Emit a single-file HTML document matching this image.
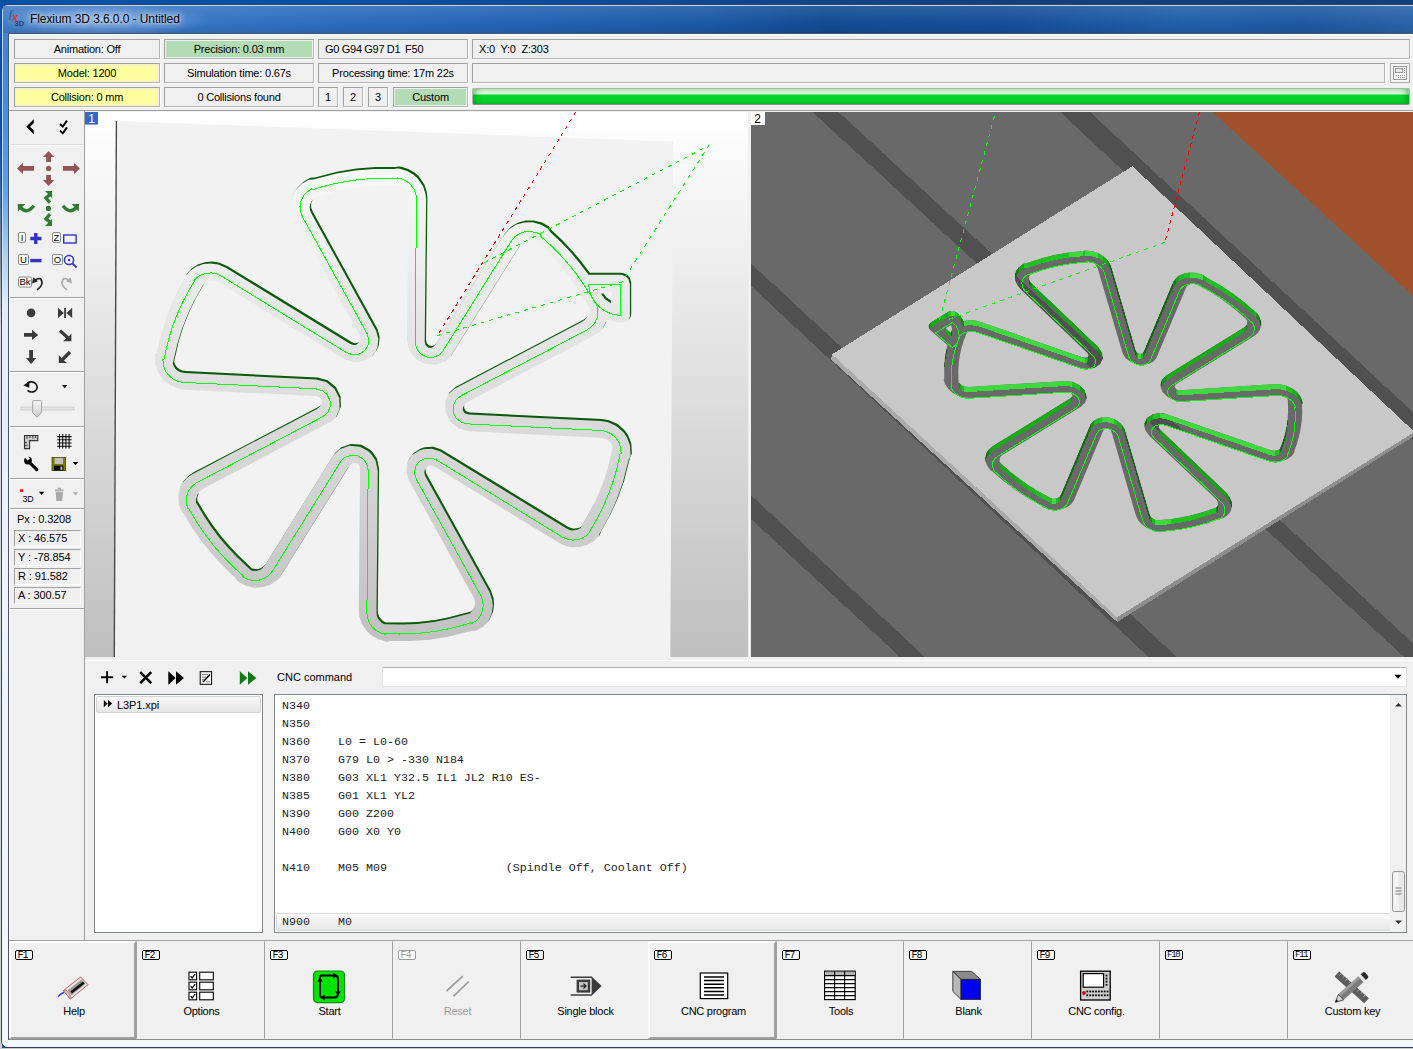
<!DOCTYPE html><html><head><meta charset="utf-8"><title>Flexium 3D 3.6.0.0 - Untitled</title><style>
*{box-sizing:border-box;margin:0;padding:0}
html,body{width:1413px;height:1049px;overflow:hidden;background:linear-gradient(90deg,#0b51a9 0,#0d4d9f 500px,#123f7c 1000px,#133f7a 1413px)}
body{position:relative;font-family:"Liberation Sans",sans-serif;font-size:11px;color:#000}
.abs{position:absolute}
#frame{position:absolute;left:1px;top:4px;width:1430px;height:1044px;border:1px solid #34455f;border-radius:7px 0 0 7px;
 background:linear-gradient(180deg,#3f7fcb 0,#4a8ee0 110px,#5da0ec 185px,#a8ccf2 245px,#e2ecf9 300px,#eef4fb 600px,#f2f9fc 1040px)}
#frame:before{content:"";position:absolute;left:0;top:0;right:0;bottom:0;border:1px solid rgba(230,242,255,.75);border-radius:6px 0 0 6px}
#tbar{position:absolute;left:3px;top:6px;width:1410px;height:27px;
 background:linear-gradient(90deg,#447fc6 0,#3f7dc8 60px,#2f6fbf 300px,#2766b7 480px,#1d5aa6 700px,#134c93 820px,#16509a 1000px,#2360aa 1180px,#1f5aa2 1300px,#2b64a8 1413px)}
#tbar:after{content:"";position:absolute;left:0;right:0;top:0;height:27px;background:linear-gradient(180deg,rgba(255,255,255,.10),rgba(255,255,255,0) 60%,rgba(0,0,30,.10))}
#title{position:absolute;left:30px;top:11px;font-size:12px;line-height:16px;color:#000;white-space:nowrap;letter-spacing:-.08px;
 text-shadow:0 0 6px rgba(255,255,255,.85),0 0 10px rgba(255,255,255,.6),0 0 3px rgba(255,255,255,.5)}
#glow{position:absolute;left:8px;top:6px;width:200px;height:27px;background:radial-gradient(ellipse 110px 16px at 95px 14px,rgba(190,215,245,.55),rgba(190,215,245,0))}
#client{position:absolute;left:8px;top:33px;width:1420px;height:1007px;background:#f0f0f0;border:1px solid #44546b;}
#client:before{content:"";position:absolute;left:0;top:0;right:0;bottom:0;border:1px solid #fff;border-bottom:none}
.cell{position:absolute;height:20px;border:1px solid;border-color:#a0a0a0 #b4b4b4 #b4b4b4 #a0a0a0;font-size:11px;line-height:18px;letter-spacing:-.2px;text-align:center;white-space:nowrap;background:#f0f0f0;box-shadow:inset 0 0 0 1px #f0f0f0,1px 1px 0 #fff}
.cell.l{text-align:left}
.y{background:#ffffa0}.g{background:#b4dcb4}
.hline{position:absolute;height:1px;background:#a0a0a0}
.vline{position:absolute;width:1px;background:#a0a0a0}
.sep{position:absolute;left:10px;width:74px;height:2px;border-top:1px solid #a0a0a0;border-bottom:1px solid #fff}
.coord{position:absolute;left:14px;width:67px;height:17px;border:1px solid;border-color:#a0a0a0 #fff #fff #a0a0a0;font-size:11px;line-height:15px;padding-left:3px;white-space:nowrap;letter-spacing:-.1px}
.fk{position:absolute;top:941px;width:128px;height:98px;border:1px solid transparent;border-left-color:#a0a0a0}
.fk.up{border:1px solid;border-color:#fff #a0a0a0 #a0a0a0 #fff;box-shadow:inset 1px 1px 0 #fff,inset -1px -1px 0 #a0a0a0}
.fk .k{position:absolute;left:5px;top:8px;width:18px;height:10px;border:1px solid #000;border-radius:2px;background:#fff;font-size:10px;line-height:9px;font-family:"Liberation Mono",monospace;letter-spacing:-1px;padding-left:1.5px;overflow:visible}
.fk .t{position:absolute;left:0.5px;width:128px;top:62px;text-align:center;letter-spacing:-.25px;font-size:11px;line-height:14px;white-space:nowrap}
.fk svg{position:absolute;left:48px;top:28px}
.fk .k.k3{font-size:8.8px;letter-spacing:-1.1px;padding-left:1px}.fk.dis .t{color:#9a9a9a}.fk.dis .k{border-color:#9a9a9a;color:#9a9a9a}
#code{position:absolute;left:274px;top:694px;width:1133px;height:239px;border:1px solid #828790;background:#fff;overflow:hidden}
#code pre{position:absolute;left:7px;top:2px;font-family:"Liberation Mono",monospace;font-size:11.67px;line-height:18px;color:#222;white-space:pre}
</style></head><body>
<div class="abs" style="left:0;top:0;width:2px;height:1049px;background:linear-gradient(180deg,#0b51a9 0,#0b51a9 140px,#8a8f96 260px,#d8d8d8 330px,#d0d0d0 100%)"></div><div class="abs" style="left:0;top:1048px;width:1413px;height:1px;background:#c8c8c8"></div><div id="frame"></div><div id="tbar"></div><div id="glow"></div>
<svg class="abs" style="left:8px;top:9px" width="20" height="20" viewBox="0 0 20 20"><text x="1" y="9" font-family="Liberation Serif,serif" font-style="italic" font-size="10" fill="#2a4a86">f</text><text x="4" y="11.5" font-family="Liberation Sans,sans-serif" font-style="italic" font-weight="bold" font-size="11" fill="#d8432a">x</text><text x="6.5" y="17" font-family="Liberation Sans,sans-serif" font-weight="bold" font-size="7.5" fill="#223e7a">3D</text></svg>
<div id="title">Flexium 3D 3.6.0.0 - Untitled</div>
<div id="client"></div>
<div class="cell " style="left:14px;top:39px;width:146px">Animation: Off</div>
<div class="cell y" style="left:14px;top:63px;width:146px">Model: 1200</div>
<div class="cell y" style="left:14px;top:87px;width:146px">Collision: 0 mm</div>
<div class="cell g" style="left:164px;top:39px;width:150px">Precision: 0.03 mm</div>
<div class="cell " style="left:164px;top:63px;width:150px">Simulation time: 0.67s</div>
<div class="cell " style="left:164px;top:87px;width:150px">0 Collisions found</div>
<div class="cell l" style="left:318px;top:39px;width:150px"><span style="padding-left:6px;word-spacing:-.5px">G0 G94 G97 D1&nbsp; F50</span></div>
<div class="cell " style="left:318px;top:63px;width:150px">Processing time: 17m 22s</div>
<div class="cell " style="left:318px;top:87px;width:20px">1</div>
<div class="cell " style="left:343px;top:87px;width:20px">2</div>
<div class="cell " style="left:368px;top:87px;width:20px">3</div>
<div class="cell g" style="left:393px;top:87px;width:75px">Custom</div>
<div class="cell l" style="left:472px;top:39px;width:938px"><span style="padding-left:6px">X:0&nbsp; Y:0&nbsp; Z:303</span></div>
<div class="cell " style="left:472px;top:63px;width:913px"></div>
<div class="abs" style="left:1390px;top:63px;width:20px;height:20px;border:1px solid #a8a8a8;background:#f4f4f4"><svg width="18" height="18" viewBox="0 0 18 18"><rect x="2.5" y="2.5" width="13" height="13" fill="#f0f0f0" stroke="#999"/><rect x="4.5" y="4.5" width="7" height="4" fill="#e8e8e8" stroke="#999"/><g fill="#999"><rect x="13" y="4" width="1" height="1"/><rect x="13" y="6" width="1" height="1"/><rect x="13" y="8" width="1" height="1"/><rect x="5" y="11" width="1" height="1"/><rect x="7" y="11" width="1" height="1"/><rect x="9" y="11" width="1" height="1"/><rect x="11" y="11" width="1" height="1"/><rect x="13" y="11" width="1" height="1"/><rect x="7" y="13" width="1" height="1"/><rect x="9" y="13" width="1" height="1"/><rect x="11" y="13" width="1" height="1"/><rect x="13" y="13" width="1" height="1"/></g></svg></div>
<div class="abs" style="left:472px;top:88px;width:938px;height:17px;border:1px solid #b2b2b2;border-bottom-color:#909090;border-radius:2px;background:linear-gradient(180deg,#c8f5cf 0,#d8fadc 5px,#06d42a 6px,#08d42c 11px,#0fc42c 15px);box-shadow:inset 6px 0 6px -3px rgba(0,120,20,.45),inset -6px 0 6px -3px rgba(0,120,20,.45)"></div>
<div class="hline" style="left:9px;top:110px;width:1404px"></div>
<div class="vline" style="left:84px;top:111px;height:830px"></div>
<svg class="abs" style="left:85px;top:112px" width="663" height="545" viewBox="85 112 663 545"><defs><linearGradient id="bgL" gradientUnits="userSpaceOnUse" x1="0" y1="112" x2="0" y2="657"><stop offset="0" stop-color="#ffffff"/><stop offset="1" stop-color="#bfbfbf"/></linearGradient><mask id="mL" maskUnits="userSpaceOnUse" x="85" y="112" width="663" height="545"><rect x="85" y="112" width="663" height="545" fill="#fff"/><path d="M157.0 351.1 L155.1 355.3 L155.2 363.2 L157.6 371.1 L158.8 373.4 L163.7 380.1 L168.1 383.8 L170.3 385.2 L178.0 388.5 L184.9 389.7 L316.0 396.1 L319.2 397.0 L321.0 398.4 L322.0 400.4 L322.1 402.6 L321.2 404.7 L318.7 406.8 L193.6 472.3 L188.5 475.8 L183.6 481.1 L180.1 487.5 L178.4 494.6 L178.9 504.2 L181.3 511.2 L183.6 513.8 L191.6 527.0 L202.5 542.5 L214.7 557.2 L224.5 567.6 L235.1 577.7 L237.7 581.3 L244.7 585.3 L252.8 587.5 L255.3 587.7 L263.5 587.0 L271.2 584.2 L277.7 579.4 L281.2 575.1 L349.5 465.7 L351.7 463.4 L353.8 462.7 L356.1 462.9 L358.1 464.0 L359.4 465.8 L360.1 469.0 L358.8 610.5 L359.4 616.7 L361.8 623.7 L367.4 631.8 L371.2 635.3 L377.7 639.1 L385.0 641.3 L387.3 641.7 L390.6 641.0 L410.6 641.1 L429.6 639.7 L448.0 636.8 L471.3 631.0 L475.7 630.7 L482.6 626.9 L488.3 621.2 L489.7 619.1 L493.0 611.7 L494.1 603.7 L493.5 598.0 L490.8 590.2 L426.5 474.0 L425.6 470.8 L425.9 468.6 L427.1 466.8 L429.1 465.7 L431.3 465.5 L434.5 466.6 L559.7 543.3 L566.7 546.2 L571.9 547.2 L579.3 547.1 L586.5 545.3 L593.0 541.8 L599.8 535.0 L600.8 531.8 L610.4 514.6 L618.0 497.7 L624.2 480.4 L630.0 457.5 L631.9 453.6 L631.2 443.1 L628.2 435.4 L625.0 430.7 L618.8 425.0 L616.6 423.5 L608.9 420.2 L601.9 419.1 L470.2 412.6 L467.0 411.8 L465.2 410.3 L464.2 408.3 L464.1 406.1 L465.0 404.1 L467.5 402.0 L593.3 336.1 L598.5 332.6 L603.5 327.3 L607.4 319.6 L615.8 322.0 L621.1 322.6 L623.7 322.5 L626.1 321.7 L628.2 320.3 L629.9 318.4 L630.9 316.1 L631.2 313.5 L631.2 282.5 L629.9 277.7 L628.3 275.7 L623.9 273.2 L621.4 272.8 L589.8 272.8 L581.5 261.8 L572.4 250.9 L562.4 240.3 L551.7 230.3 L549.1 226.6 L542.0 222.6 L533.9 220.4 L525.6 220.5 L517.7 222.7 L510.7 227.0 L504.5 234.0 L436.7 342.9 L434.4 345.2 L432.3 346.0 L430.1 345.8 L428.1 344.7 L426.7 342.9 L426.0 339.6 L427.4 197.7 L426.7 191.5 L424.4 184.4 L418.8 176.3 L414.9 172.8 L408.4 169.0 L401.2 166.8 L398.8 166.5 L395.5 167.1 L375.5 167.1 L356.5 168.6 L338.0 171.6 L314.7 177.5 L310.3 177.8 L303.4 181.7 L297.7 187.4 L296.3 189.5 L293.1 196.9 L292.0 205.0 L292.6 210.6 L295.2 218.4 L359.6 334.7 L360.5 337.9 L360.2 340.1 L359.0 341.9 L357.0 343.0 L354.8 343.2 L351.7 342.1 L227.6 266.2 L219.6 262.7 L212.2 261.6 L204.8 262.2 L197.8 264.6 L191.7 268.6 L186.8 274.0 L185.8 277.2 L174.4 298.4 L167.2 315.4 L161.4 332.9ZM175.1 364.4 L174.1 361.5 L178.4 342.8 L183.4 326.5 L189.8 310.7 L195.3 299.2 L204.5 282.9 L207.1 281.2 L212.6 280.3 L215.4 280.8 L218.5 282.3 L344.8 359.3 L352.9 361.9 L361.4 361.4 L365.3 360.2 L372.4 355.9 L377.2 349.1 L378.7 345.4 L379.7 337.1 L377.5 329.0 L312.7 211.6 L311.3 208.1 L311.0 205.0 L311.5 202.0 L312.9 199.2 L314.9 197.0 L338.0 190.9 L350.8 188.4 L368.1 186.3 L381.2 185.7 L400.5 185.8 L403.2 187.3 L407.0 191.5 L408.0 194.2 L408.4 197.5 L407.0 339.9 L409.2 350.1 L414.1 357.1 L417.2 359.8 L424.8 363.8 L435.4 364.8 L445.2 361.2 L451.2 355.5 L520.5 244.7 L522.9 241.8 L525.5 240.1 L528.4 239.1 L531.5 239.0 L534.6 239.7 L549.1 253.4 L558.2 263.0 L566.7 273.1 L574.6 283.7 L581.9 294.7 L589.7 307.8 L589.8 310.6 L588.0 315.8 L586.2 317.9 L583.4 319.8 L455.5 387.0 L449.4 392.6 L445.2 402.0 L445.5 412.4 L450.3 421.8 L458.6 428.5 L468.8 431.2 L600.9 437.7 L604.7 438.4 L607.6 439.8 L610.0 441.8 L611.8 444.4 L612.8 447.3 L608.3 466.2 L604.6 478.4 L600.2 490.5 L595.1 502.2 L581.9 526.1 L579.4 527.7 L573.8 528.7 L571.0 528.1 L567.9 526.7 L441.3 449.4 L433.2 446.8 L424.7 447.3 L420.8 448.5 L413.7 452.9 L408.9 459.6 L407.4 463.3 L406.4 471.6 L408.6 479.7 L473.4 597.0 L474.7 600.5 L475.1 603.6 L474.5 606.6 L473.2 609.3 L471.1 611.6 L448.0 617.6 L435.2 620.0 L418.0 622.0 L404.9 622.6 L385.7 622.4 L382.9 620.9 L379.1 616.7 L378.2 614.1 L377.8 610.7 L379.1 468.8 L376.9 458.6 L372.0 451.6 L368.9 448.9 L361.3 444.8 L350.8 443.9 L341.0 447.4 L335.0 453.1 L266.1 563.5 L263.7 566.3 L261.2 568.0 L258.2 568.9 L255.1 569.1 L252.1 568.4 L237.7 554.7 L228.6 545.1 L220.1 535.1 L212.3 524.5 L205.0 513.6 L197.3 500.5 L197.2 497.8 L198.9 492.6 L200.7 490.5 L203.5 488.6 L330.6 421.7 L336.8 416.2 L340.9 406.8 L340.6 396.4 L335.9 387.0 L327.6 380.2 L317.4 377.5 L185.8 371.1 L182.1 370.4 L179.2 369.1 L176.8 367.0ZM606.3 297.3 L602.2 291.6 L612.2 291.6 L612.2 301.4Z" fill-rule="evenodd" fill="#000" transform="translate(-1.3 1.9)"/></mask></defs><rect x="85" y="112" width="663" height="545" fill="url(#bgL)"/><path d="M116.5 121 L673 141.5 L670.3 660 L114.2 660Z" fill="#f2f2f2"/><path d="M116.4 121 L114.3 657" stroke="#4a4a4a" stroke-width="1.4" fill="none"/><path d="M157.0 351.1 L155.1 355.3 L155.2 363.2 L157.6 371.1 L158.8 373.4 L163.7 380.1 L168.1 383.8 L170.3 385.2 L178.0 388.5 L184.9 389.7 L316.0 396.1 L319.2 397.0 L321.0 398.4 L322.0 400.4 L322.1 402.6 L321.2 404.7 L318.7 406.8 L193.6 472.3 L188.5 475.8 L183.6 481.1 L180.1 487.5 L178.4 494.6 L178.9 504.2 L181.3 511.2 L183.6 513.8 L191.6 527.0 L202.5 542.5 L214.7 557.2 L224.5 567.6 L235.1 577.7 L237.7 581.3 L244.7 585.3 L252.8 587.5 L255.3 587.7 L263.5 587.0 L271.2 584.2 L277.7 579.4 L281.2 575.1 L349.5 465.7 L351.7 463.4 L353.8 462.7 L356.1 462.9 L358.1 464.0 L359.4 465.8 L360.1 469.0 L358.8 610.5 L359.4 616.7 L361.8 623.7 L367.4 631.8 L371.2 635.3 L377.7 639.1 L385.0 641.3 L387.3 641.7 L390.6 641.0 L410.6 641.1 L429.6 639.7 L448.0 636.8 L471.3 631.0 L475.7 630.7 L482.6 626.9 L488.3 621.2 L489.7 619.1 L493.0 611.7 L494.1 603.7 L493.5 598.0 L490.8 590.2 L426.5 474.0 L425.6 470.8 L425.9 468.6 L427.1 466.8 L429.1 465.7 L431.3 465.5 L434.5 466.6 L559.7 543.3 L566.7 546.2 L571.9 547.2 L579.3 547.1 L586.5 545.3 L593.0 541.8 L599.8 535.0 L600.8 531.8 L610.4 514.6 L618.0 497.7 L624.2 480.4 L630.0 457.5 L631.9 453.6 L631.2 443.1 L628.2 435.4 L625.0 430.7 L618.8 425.0 L616.6 423.5 L608.9 420.2 L601.9 419.1 L470.2 412.6 L467.0 411.8 L465.2 410.3 L464.2 408.3 L464.1 406.1 L465.0 404.1 L467.5 402.0 L593.3 336.1 L598.5 332.6 L603.5 327.3 L607.4 319.6 L615.8 322.0 L621.1 322.6 L623.7 322.5 L626.1 321.7 L628.2 320.3 L629.9 318.4 L630.9 316.1 L631.2 313.5 L631.2 282.5 L629.9 277.7 L628.3 275.7 L623.9 273.2 L621.4 272.8 L589.8 272.8 L581.5 261.8 L572.4 250.9 L562.4 240.3 L551.7 230.3 L549.1 226.6 L542.0 222.6 L533.9 220.4 L525.6 220.5 L517.7 222.7 L510.7 227.0 L504.5 234.0 L436.7 342.9 L434.4 345.2 L432.3 346.0 L430.1 345.8 L428.1 344.7 L426.7 342.9 L426.0 339.6 L427.4 197.7 L426.7 191.5 L424.4 184.4 L418.8 176.3 L414.9 172.8 L408.4 169.0 L401.2 166.8 L398.8 166.5 L395.5 167.1 L375.5 167.1 L356.5 168.6 L338.0 171.6 L314.7 177.5 L310.3 177.8 L303.4 181.7 L297.7 187.4 L296.3 189.5 L293.1 196.9 L292.0 205.0 L292.6 210.6 L295.2 218.4 L359.6 334.7 L360.5 337.9 L360.2 340.1 L359.0 341.9 L357.0 343.0 L354.8 343.2 L351.7 342.1 L227.6 266.2 L219.6 262.7 L212.2 261.6 L204.8 262.2 L197.8 264.6 L191.7 268.6 L186.8 274.0 L185.8 277.2 L174.4 298.4 L167.2 315.4 L161.4 332.9ZM175.1 364.4 L174.1 361.5 L178.4 342.8 L183.4 326.5 L189.8 310.7 L195.3 299.2 L204.5 282.9 L207.1 281.2 L212.6 280.3 L215.4 280.8 L218.5 282.3 L344.8 359.3 L352.9 361.9 L361.4 361.4 L365.3 360.2 L372.4 355.9 L377.2 349.1 L378.7 345.4 L379.7 337.1 L377.5 329.0 L312.7 211.6 L311.3 208.1 L311.0 205.0 L311.5 202.0 L312.9 199.2 L314.9 197.0 L338.0 190.9 L350.8 188.4 L368.1 186.3 L381.2 185.7 L400.5 185.8 L403.2 187.3 L407.0 191.5 L408.0 194.2 L408.4 197.5 L407.0 339.9 L409.2 350.1 L414.1 357.1 L417.2 359.8 L424.8 363.8 L435.4 364.8 L445.2 361.2 L451.2 355.5 L520.5 244.7 L522.9 241.8 L525.5 240.1 L528.4 239.1 L531.5 239.0 L534.6 239.7 L549.1 253.4 L558.2 263.0 L566.7 273.1 L574.6 283.7 L581.9 294.7 L589.7 307.8 L589.8 310.6 L588.0 315.8 L586.2 317.9 L583.4 319.8 L455.5 387.0 L449.4 392.6 L445.2 402.0 L445.5 412.4 L450.3 421.8 L458.6 428.5 L468.8 431.2 L600.9 437.7 L604.7 438.4 L607.6 439.8 L610.0 441.8 L611.8 444.4 L612.8 447.3 L608.3 466.2 L604.6 478.4 L600.2 490.5 L595.1 502.2 L581.9 526.1 L579.4 527.7 L573.8 528.7 L571.0 528.1 L567.9 526.7 L441.3 449.4 L433.2 446.8 L424.7 447.3 L420.8 448.5 L413.7 452.9 L408.9 459.6 L407.4 463.3 L406.4 471.6 L408.6 479.7 L473.4 597.0 L474.7 600.5 L475.1 603.6 L474.5 606.6 L473.2 609.3 L471.1 611.6 L448.0 617.6 L435.2 620.0 L418.0 622.0 L404.9 622.6 L385.7 622.4 L382.9 620.9 L379.1 616.7 L378.2 614.1 L377.8 610.7 L379.1 468.8 L376.9 458.6 L372.0 451.6 L368.9 448.9 L361.3 444.8 L350.8 443.9 L341.0 447.4 L335.0 453.1 L266.1 563.5 L263.7 566.3 L261.2 568.0 L258.2 568.9 L255.1 569.1 L252.1 568.4 L237.7 554.7 L228.6 545.1 L220.1 535.1 L212.3 524.5 L205.0 513.6 L197.3 500.5 L197.2 497.8 L198.9 492.6 L200.7 490.5 L203.5 488.6 L330.6 421.7 L336.8 416.2 L340.9 406.8 L340.6 396.4 L335.9 387.0 L327.6 380.2 L317.4 377.5 L185.8 371.1 L182.1 370.4 L179.2 369.1 L176.8 367.0ZM606.3 297.3 L602.2 291.6 L612.2 291.6 L612.2 301.4Z" fill-rule="evenodd" fill="url(#bgL)"/><path d="M157.0 351.1 L155.1 355.3 L155.2 363.2 L157.6 371.1 L158.8 373.4 L163.7 380.1 L168.1 383.8 L170.3 385.2 L178.0 388.5 L184.9 389.7 L316.0 396.1 L319.2 397.0 L321.0 398.4 L322.0 400.4 L322.1 402.6 L321.2 404.7 L318.7 406.8 L193.6 472.3 L188.5 475.8 L183.6 481.1 L180.1 487.5 L178.4 494.6 L178.9 504.2 L181.3 511.2 L183.6 513.8 L191.6 527.0 L202.5 542.5 L214.7 557.2 L224.5 567.6 L235.1 577.7 L237.7 581.3 L244.7 585.3 L252.8 587.5 L255.3 587.7 L263.5 587.0 L271.2 584.2 L277.7 579.4 L281.2 575.1 L349.5 465.7 L351.7 463.4 L353.8 462.7 L356.1 462.9 L358.1 464.0 L359.4 465.8 L360.1 469.0 L358.8 610.5 L359.4 616.7 L361.8 623.7 L367.4 631.8 L371.2 635.3 L377.7 639.1 L385.0 641.3 L387.3 641.7 L390.6 641.0 L410.6 641.1 L429.6 639.7 L448.0 636.8 L471.3 631.0 L475.7 630.7 L482.6 626.9 L488.3 621.2 L489.7 619.1 L493.0 611.7 L494.1 603.7 L493.5 598.0 L490.8 590.2 L426.5 474.0 L425.6 470.8 L425.9 468.6 L427.1 466.8 L429.1 465.7 L431.3 465.5 L434.5 466.6 L559.7 543.3 L566.7 546.2 L571.9 547.2 L579.3 547.1 L586.5 545.3 L593.0 541.8 L599.8 535.0 L600.8 531.8 L610.4 514.6 L618.0 497.7 L624.2 480.4 L630.0 457.5 L631.9 453.6 L631.2 443.1 L628.2 435.4 L625.0 430.7 L618.8 425.0 L616.6 423.5 L608.9 420.2 L601.9 419.1 L470.2 412.6 L467.0 411.8 L465.2 410.3 L464.2 408.3 L464.1 406.1 L465.0 404.1 L467.5 402.0 L593.3 336.1 L598.5 332.6 L603.5 327.3 L607.4 319.6 L615.8 322.0 L621.1 322.6 L623.7 322.5 L626.1 321.7 L628.2 320.3 L629.9 318.4 L630.9 316.1 L631.2 313.5 L631.2 282.5 L629.9 277.7 L628.3 275.7 L623.9 273.2 L621.4 272.8 L589.8 272.8 L581.5 261.8 L572.4 250.9 L562.4 240.3 L551.7 230.3 L549.1 226.6 L542.0 222.6 L533.9 220.4 L525.6 220.5 L517.7 222.7 L510.7 227.0 L504.5 234.0 L436.7 342.9 L434.4 345.2 L432.3 346.0 L430.1 345.8 L428.1 344.7 L426.7 342.9 L426.0 339.6 L427.4 197.7 L426.7 191.5 L424.4 184.4 L418.8 176.3 L414.9 172.8 L408.4 169.0 L401.2 166.8 L398.8 166.5 L395.5 167.1 L375.5 167.1 L356.5 168.6 L338.0 171.6 L314.7 177.5 L310.3 177.8 L303.4 181.7 L297.7 187.4 L296.3 189.5 L293.1 196.9 L292.0 205.0 L292.6 210.6 L295.2 218.4 L359.6 334.7 L360.5 337.9 L360.2 340.1 L359.0 341.9 L357.0 343.0 L354.8 343.2 L351.7 342.1 L227.6 266.2 L219.6 262.7 L212.2 261.6 L204.8 262.2 L197.8 264.6 L191.7 268.6 L186.8 274.0 L185.8 277.2 L174.4 298.4 L167.2 315.4 L161.4 332.9ZM175.1 364.4 L174.1 361.5 L178.4 342.8 L183.4 326.5 L189.8 310.7 L195.3 299.2 L204.5 282.9 L207.1 281.2 L212.6 280.3 L215.4 280.8 L218.5 282.3 L344.8 359.3 L352.9 361.9 L361.4 361.4 L365.3 360.2 L372.4 355.9 L377.2 349.1 L378.7 345.4 L379.7 337.1 L377.5 329.0 L312.7 211.6 L311.3 208.1 L311.0 205.0 L311.5 202.0 L312.9 199.2 L314.9 197.0 L338.0 190.9 L350.8 188.4 L368.1 186.3 L381.2 185.7 L400.5 185.8 L403.2 187.3 L407.0 191.5 L408.0 194.2 L408.4 197.5 L407.0 339.9 L409.2 350.1 L414.1 357.1 L417.2 359.8 L424.8 363.8 L435.4 364.8 L445.2 361.2 L451.2 355.5 L520.5 244.7 L522.9 241.8 L525.5 240.1 L528.4 239.1 L531.5 239.0 L534.6 239.7 L549.1 253.4 L558.2 263.0 L566.7 273.1 L574.6 283.7 L581.9 294.7 L589.7 307.8 L589.8 310.6 L588.0 315.8 L586.2 317.9 L583.4 319.8 L455.5 387.0 L449.4 392.6 L445.2 402.0 L445.5 412.4 L450.3 421.8 L458.6 428.5 L468.8 431.2 L600.9 437.7 L604.7 438.4 L607.6 439.8 L610.0 441.8 L611.8 444.4 L612.8 447.3 L608.3 466.2 L604.6 478.4 L600.2 490.5 L595.1 502.2 L581.9 526.1 L579.4 527.7 L573.8 528.7 L571.0 528.1 L567.9 526.7 L441.3 449.4 L433.2 446.8 L424.7 447.3 L420.8 448.5 L413.7 452.9 L408.9 459.6 L407.4 463.3 L406.4 471.6 L408.6 479.7 L473.4 597.0 L474.7 600.5 L475.1 603.6 L474.5 606.6 L473.2 609.3 L471.1 611.6 L448.0 617.6 L435.2 620.0 L418.0 622.0 L404.9 622.6 L385.7 622.4 L382.9 620.9 L379.1 616.7 L378.2 614.1 L377.8 610.7 L379.1 468.8 L376.9 458.6 L372.0 451.6 L368.9 448.9 L361.3 444.8 L350.8 443.9 L341.0 447.4 L335.0 453.1 L266.1 563.5 L263.7 566.3 L261.2 568.0 L258.2 568.9 L255.1 569.1 L252.1 568.4 L237.7 554.7 L228.6 545.1 L220.1 535.1 L212.3 524.5 L205.0 513.6 L197.3 500.5 L197.2 497.8 L198.9 492.6 L200.7 490.5 L203.5 488.6 L330.6 421.7 L336.8 416.2 L340.9 406.8 L340.6 396.4 L335.9 387.0 L327.6 380.2 L317.4 377.5 L185.8 371.1 L182.1 370.4 L179.2 369.1 L176.8 367.0ZM606.3 297.3 L602.2 291.6 L612.2 291.6 L612.2 301.4Z" fill-rule="evenodd" fill="#0a5a0a" mask="url(#mL)"/><path d="M442.9 350.9 L438.5 355.3 L432.5 357.5 L426.0 356.9 L420.3 353.7 L416.5 348.5 L415.1 342.3 L416.5 199.3 L415.9 194.2 L414.1 189.4 L411.1 185.1 L407.2 181.6 L402.6 179.2 L397.6 177.8 L397.5 178.6 L393.0 178.4 L388.4 178.3 L383.8 178.3 L379.3 178.3 L374.7 178.5 L370.2 178.7 L365.6 179.0 L361.1 179.4 L356.6 179.9 L352.1 180.5 L347.6 181.2 L343.1 182.0 L338.7 182.8 L334.2 183.7 L329.8 184.8 L325.5 185.9 L321.1 187.1 L316.8 188.3 L312.5 189.7 L312.0 188.7 L307.3 191.7 L303.5 195.8 L301.0 200.8 L300.0 206.4 L300.6 212.0 L302.7 217.3 L367.0 333.4 L368.8 339.5 L367.9 345.8 L364.3 351.0 L358.9 354.1 L352.5 354.7 L346.3 352.5 L221.4 276.1 L216.7 273.9 L211.6 272.9 L206.5 273.2 L201.6 274.6 L197.2 277.2 L193.7 280.8 L194.3 281.3 L192.0 285.1 L189.8 288.9 L187.6 292.8 L185.5 296.7 L183.5 300.6 L181.5 304.6 L179.7 308.7 L177.9 312.7 L176.2 316.8 L174.6 321.0 L173.1 325.1 L171.7 329.3 L170.3 333.6 L169.0 337.8 L167.9 342.1 L166.8 346.4 L165.8 350.8 L164.9 355.1 L164.0 359.5 L162.9 359.4 L163.3 365.0 L165.1 370.4 L168.4 375.1 L172.8 378.9 L178.0 381.4 L183.6 382.4 L315.8 388.8 L322.1 390.5 L327.1 394.6 L330.0 400.4 L330.2 406.7 L327.7 412.5 L322.9 416.6 L196.9 482.6 L192.8 485.5 L189.5 489.3 L187.3 493.8 L186.3 498.7 L186.5 503.8 L188.0 508.7 L188.7 508.4 L190.9 512.4 L193.2 516.3 L195.6 520.2 L198.0 524.1 L200.6 527.9 L203.1 531.7 L205.8 535.4 L208.6 539.0 L211.4 542.6 L214.2 546.2 L217.2 549.7 L220.2 553.2 L223.3 556.5 L226.4 559.9 L229.6 563.2 L232.9 566.4 L236.2 569.5 L239.6 572.6 L243.1 575.6 L242.5 576.5 L247.6 579.2 L253.2 580.4 L258.9 580.2 L264.2 578.4 L268.9 575.3 L272.5 571.1 L340.5 461.8 L344.9 457.3 L350.9 455.2 L357.3 455.7 L363.0 458.9 L366.9 464.1 L368.2 470.4 L366.9 612.9 L367.5 617.9 L369.3 622.8 L372.2 627.0 L376.1 630.5 L380.7 633.0 L385.7 634.3 L385.8 633.6 L390.3 633.8 L394.9 633.9 L399.5 634.0 L404.0 633.9 L408.6 633.8 L413.1 633.6 L417.6 633.3 L422.1 632.9 L426.7 632.4 L431.2 631.8 L435.6 631.2 L440.1 630.4 L444.6 629.6 L449.0 628.7 L453.4 627.7 L457.8 626.6 L462.1 625.4 L466.5 624.2 L470.8 622.8 L471.2 623.8 L476.0 620.9 L479.8 616.8 L482.2 611.8 L483.2 606.3 L482.7 600.6 L480.6 595.3 L416.3 479.3 L414.5 473.2 L415.4 466.9 L419.0 461.8 L424.4 458.6 L430.9 458.0 L437.0 460.2 L562.1 536.9 L566.9 539.0 L572.0 540.1 L577.2 539.8 L582.1 538.3 L586.5 535.7 L590.0 532.1 L589.4 531.7 L591.7 527.9 L594.0 524.1 L596.2 520.2 L598.3 516.3 L600.4 512.4 L602.3 508.4 L604.2 504.3 L606.0 500.3 L607.7 496.1 L609.3 492.0 L610.8 487.8 L612.3 483.6 L613.7 479.4 L615.0 475.1 L616.2 470.8 L617.3 466.5 L618.3 462.1 L619.2 457.8 L620.1 453.4 L621.1 453.5 L620.8 447.9 L619.0 442.5 L615.7 437.7 L611.3 433.9 L606.1 431.4 L600.4 430.4 L467.6 423.9 L461.3 422.2 L456.2 418.1 L453.3 412.4 L453.1 406.0 L455.7 400.2 L460.5 396.1 L587.2 329.8 L591.4 326.9 L594.7 323.1 L596.9 318.5 L598.0 313.6 L597.7 308.5 L596.2 303.5 L595.5 303.8 L593.3 299.8 L591.0 295.9 L588.6 292.0 L586.1 288.1 L583.6 284.3 L581.0 280.5 L578.3 276.8 L575.6 273.1 L572.8 269.5 L569.9 265.9 L566.9 262.4 L563.9 258.9 L560.8 255.5 L557.6 252.2 L554.4 248.9 L551.1 245.7 L547.7 242.5 L544.3 239.4 L540.8 236.4 L541.5 235.5 L536.4 232.8 L530.7 231.6 L525.0 231.8 L519.6 233.6 L514.9 236.8 L511.3 241.1ZM620.3 284.2 L588.7 284.2 L589.1 288.2 L590.0 292.1 L591.4 295.9 L593.2 299.5 L595.6 302.8 L598.3 305.8 L601.4 308.5 L604.8 310.8 L608.4 312.6 L612.3 314.0 L616.3 314.9 L620.3 315.3 L620.3 284.2Z" fill="none" stroke="#00ff00" stroke-width="1" shape-rendering="crispEdges"/><path d="M575.8 112 L437.4 335.6" stroke="#ff0000" stroke-width="1" stroke-dasharray="4 4" fill="none" shape-rendering="crispEdges"/><path d="M437.4 335.6 L622 282 L708.7 145.6 L483 263.4" stroke="#00ff00" stroke-width="1" stroke-dasharray="4 5" fill="none" shape-rendering="crispEdges"/><rect x="85" y="112" width="13" height="12.6" fill="#316ac5"/><text x="91.5" y="122.6" font-family="Liberation Sans,sans-serif" font-size="12" fill="#fff" text-anchor="middle">1</text></svg>
<svg class="abs" style="left:751px;top:112px" width="662" height="545" viewBox="751 112 662 545" shape-rendering="crispEdges"><defs><clipPath id="clR"><path d="M1219.8 518.9 L1223.1 518.3 L1227.3 515.5 L1230.4 511.7 L1231.0 510.4 L1232.0 505.8 L1231.7 502.4 L1231.4 500.9 L1229.1 496.3 L1226.1 492.6 L1159.9 429.6 L1158.7 427.8 L1158.5 426.5 L1159.1 425.3 L1160.3 424.5 L1161.8 424.3 L1164.3 424.7 L1266.5 460.1 L1271.1 461.3 L1276.7 461.8 L1282.0 461.2 L1286.8 459.5 L1291.8 456.0 L1294.3 452.5 L1294.5 450.5 L1297.5 442.3 L1300.1 431.8 L1301.7 421.2 L1302.2 413.0 L1302.0 404.7 L1302.6 402.2 L1301.1 397.6 L1298.0 393.1 L1296.8 391.8 L1292.0 388.3 L1286.4 385.7 L1280.4 384.3 L1276.1 384.1 L1180.2 390.2 L1177.7 389.9 L1176.2 389.2 L1175.1 388.1 L1174.7 386.8 L1174.9 385.5 L1176.3 384.1 L1254.2 336.1 L1257.3 333.6 L1259.9 330.1 L1261.4 324.8 L1261.2 321.8 L1259.8 317.4 L1257.2 313.3 L1256.2 312.2 L1254.1 310.8 L1243.5 301.6 L1232.6 293.3 L1221.3 285.7 L1205.8 276.9 L1203.3 275.0 L1197.5 273.1 L1191.4 272.4 L1189.5 272.5 L1183.7 273.5 L1178.8 275.8 L1176.0 278.0 L1173.2 281.9 L1143.8 351.6 L1142.6 353.1 L1141.2 353.7 L1139.6 353.8 L1138.0 353.3 L1136.7 352.3 L1135.6 350.5 L1111.0 266.1 L1108.9 261.9 L1106.7 259.2 L1102.7 255.7 L1097.9 253.0 L1092.5 251.2 L1085.3 250.5 L1083.0 251.1 L1068.5 252.5 L1055.3 254.8 L1042.6 257.9 L1026.9 263.0 L1023.8 263.5 L1018.5 267.4 L1015.8 271.5 L1015.0 274.6 L1015.1 279.4 L1015.5 280.9 L1017.8 285.6 L1020.8 289.2 L1087.1 352.5 L1088.4 354.3 L1088.5 355.6 L1088.0 356.7 L1086.8 357.5 L1085.2 357.8 L1082.8 357.4 L980.1 321.7 L975.5 320.6 L969.9 320.1 L963.6 320.9 L960.5 316.2 L958.0 313.5 L956.6 312.4 L954.9 311.5 L953.0 311.0 L951.0 310.9 L949.2 311.2 L947.7 311.9 L930.7 322.6 L928.8 324.9 L928.5 326.3 L929.5 329.2 L930.6 330.5 L947.4 345.1 L945.7 352.7 L944.6 360.7 L944.2 369.0 L944.3 377.4 L943.7 379.8 L945.2 384.5 L948.4 389.0 L952.8 392.9 L958.2 395.8 L964.2 397.5 L971.4 398.0 L1066.8 391.9 L1069.3 392.2 L1070.8 392.9 L1071.9 394.0 L1072.4 395.3 L1072.1 396.6 L1070.7 398.0 L992.4 446.2 L989.4 448.7 L986.7 452.2 L985.3 457.6 L985.4 460.6 L986.8 464.9 L989.4 469.0 L990.5 470.2 L992.6 471.6 L1003.2 480.8 L1014.2 489.1 L1025.6 496.7 L1041.1 505.4 L1043.6 507.4 L1049.4 509.3 L1055.6 509.9 L1057.5 509.9 L1063.3 508.8 L1068.2 506.5 L1071.0 504.3 L1073.9 500.4 L1103.3 430.5 L1104.5 429.0 L1105.9 428.4 L1107.5 428.3 L1109.1 428.9 L1110.4 429.8 L1111.5 431.7 L1135.8 515.3 L1138.2 520.2 L1141.5 524.1 L1145.8 527.3 L1150.8 529.7 L1156.3 531.2 L1161.8 531.6 L1164.1 531.0 L1181.7 529.0 L1194.8 526.5 L1207.5 523.1ZM1217.4 505.9 L1216.4 507.4 L1203.8 511.8 L1192.3 515.1 L1180.3 517.6 L1171.0 519.0 L1157.2 520.3 L1155.0 519.7 L1151.5 517.5 L1150.4 516.0 L1149.5 514.0 L1124.6 428.9 L1121.7 424.2 L1116.9 420.5 L1114.2 419.1 L1108.0 417.3 L1101.8 417.4 L1099.0 418.0 L1093.9 420.4 L1090.6 424.2 L1060.9 494.7 L1059.7 496.5 L1058.2 497.7 L1056.2 498.5 L1054.0 498.8 L1051.7 498.6 L1036.1 490.0 L1028.0 484.9 L1017.7 477.6 L1010.4 471.8 L1000.2 462.8 L999.5 461.0 L999.9 457.8 L1000.8 456.4 L1002.4 455.1 L1080.9 406.8 L1085.4 402.2 L1086.6 397.5 L1086.4 395.2 L1084.6 390.3 L1079.5 385.0 L1072.3 381.7 L1066.0 380.9 L968.7 386.9 L965.9 386.8 L963.6 386.2 L961.5 385.1 L959.8 383.7 L958.5 382.1 L958.3 370.7 L958.8 363.1 L959.8 355.7 L961.4 348.4 L963.5 341.3 L966.6 333.2 L968.0 332.2 L971.8 331.2 L973.9 331.3 L976.4 331.9 L1080.9 368.1 L1087.2 369.0 L1094.6 367.7 L1100.1 364.0 L1102.7 358.5 L1102.0 352.4 L1098.0 346.7 L1031.5 283.3 L1029.9 281.3 L1029.2 279.5 L1029.0 277.7 L1029.5 276.0 L1030.5 274.5 L1043.2 270.1 L1051.8 267.6 L1060.7 265.5 L1069.9 263.9 L1089.9 261.7 L1092.1 262.4 L1095.6 264.6 L1096.7 266.1 L1097.6 268.1 L1122.6 353.2 L1125.4 357.9 L1130.2 361.6 L1132.9 363.0 L1139.1 364.8 L1145.3 364.7 L1148.1 364.1 L1153.2 361.8 L1156.4 357.9 L1186.1 287.6 L1187.3 285.8 L1188.8 284.6 L1190.8 283.8 L1193.0 283.5 L1195.3 283.7 L1210.8 292.3 L1218.9 297.4 L1229.1 304.7 L1236.4 310.5 L1246.5 319.5 L1247.2 321.3 L1246.9 324.5 L1245.9 325.9 L1244.3 327.2 L1166.1 375.4 L1161.7 379.9 L1160.5 384.6 L1160.7 387.0 L1162.5 391.9 L1167.6 397.1 L1174.7 400.4 L1181.0 401.2 L1277.8 395.2 L1280.6 395.3 L1282.9 395.9 L1285.0 396.9 L1286.7 398.3 L1287.9 400.0 L1288.1 411.4 L1287.7 418.8 L1286.7 426.2 L1285.1 433.5 L1283.0 440.7 L1280.0 448.7 L1278.5 449.7 L1274.8 450.7 L1272.7 450.6 L1270.2 450.0 L1166.1 414.0 L1159.8 413.1 L1152.5 414.4 L1147.0 418.1 L1144.4 423.5 L1145.1 429.7 L1149.1 435.4 L1215.4 498.6 L1217.0 500.6 L1217.8 502.4 L1217.9 504.2ZM952.0 329.0 L951.1 332.9 L945.8 328.3 L951.2 324.9Z" clip-rule="evenodd"/></clipPath></defs><rect x="751" y="112" width="662" height="545" fill="#696969"/><path d="M812.5 112 L838.7 112 L1427.9 657 L1404.2 657Z" fill="#505050"/><path d="M751 263.7 L1177 657 L1148.5 657 L751 286Z" fill="#505050"/><path d="M1060 112 L1090 112 L1413 412.1 L1413 440Z" fill="#505050"/><path d="M751 495.3 L925 657 L900 657 L751 519.1Z" fill="#505050"/><path d="M1212.4 112 L1413 112 L1413 296Z" fill="#a0522d"/><path d="M832.1 354.3 L1117.2 617.2 L1117.2 622 L830.8 359.2Z" fill="#ababab"/><path d="M1117.2 617.2 L1414.5 432 L1414.5 435.8 L1117.2 622Z" fill="#8e8e8e"/><path d="M1132.4 166.2 L832.1 354.3 L1117.2 617.2 L1414.5 432Z" fill="#c8c8c8"/><g clip-path="url(#clR)"><rect x="751" y="112" width="662" height="545" fill="#696969"/><path d="M812.5 112 L838.7 112 L1427.9 657 L1404.2 657Z" fill="#505050"/><path d="M751 263.7 L1177 657 L1148.5 657 L751 286Z" fill="#505050"/><path d="M1060 112 L1090 112 L1413 412.1 L1413 440Z" fill="#505050"/><path d="M751 495.3 L925 657 L900 657 L751 519.1Z" fill="#505050"/><path d="M1232.0 505.8 L1231.7 502.4 L1231.7 507.5 L1232.0 510.9Z" fill="#074b07"/><path d="M1231.7 502.4 L1231.4 500.9 L1231.4 506.0 L1231.7 507.5Z" fill="#085b08"/><path d="M1231.4 500.9 L1229.1 496.3 L1229.1 501.4 L1231.4 506.0Z" fill="#0a790a"/><path d="M1229.1 496.3 L1226.1 492.6 L1226.1 497.7 L1229.1 501.4Z" fill="#109610"/><path d="M1226.1 492.6 L1159.9 429.6 L1159.9 434.7 L1226.1 497.7Z" fill="#15a415"/><path d="M1159.9 429.6 L1158.7 427.8 L1158.7 432.9 L1159.9 434.7Z" fill="#0d900d"/><path d="M1158.7 427.8 L1158.5 426.5 L1158.5 431.6 L1158.7 432.9Z" fill="#074b07"/><path d="M1302.6 402.2 L1301.1 397.6 L1301.1 402.7 L1302.6 407.3Z" fill="#096a09"/><path d="M1301.1 397.6 L1298.0 393.1 L1298.0 398.2 L1301.1 402.7Z" fill="#0d900d"/><path d="M1298.0 393.1 L1296.8 391.8 L1296.8 396.9 L1298.0 398.2Z" fill="#129e12"/><path d="M1296.8 391.8 L1292.0 388.3 L1292.0 393.4 L1296.8 396.9Z" fill="#1ab21a"/><path d="M1292.0 388.3 L1286.4 385.7 L1286.4 390.8 L1292.0 393.4Z" fill="#20c420"/><path d="M1286.4 385.7 L1280.4 384.3 L1276.1 384.1 L1180.2 390.2 L1177.7 389.9 L1177.7 395.0 L1180.2 395.3 L1276.1 389.2 L1280.4 389.4 L1286.4 390.8Z" fill="#3dda3d"/><path d="M1177.7 389.9 L1176.2 389.2 L1176.2 394.3 L1177.7 395.0Z" fill="#20c420"/><path d="M1176.2 389.2 L1175.1 388.1 L1175.1 393.2 L1176.2 394.3Z" fill="#129e12"/><path d="M1175.1 388.1 L1174.7 386.8 L1174.7 391.9 L1175.1 393.2Z" fill="#096a09"/><path d="M1261.4 324.8 L1261.2 321.8 L1261.2 326.9 L1261.4 329.9Z" fill="#064406"/><path d="M1261.2 321.8 L1259.8 317.4 L1259.8 322.5 L1261.2 326.9Z" fill="#096209"/><path d="M1259.8 317.4 L1257.2 313.3 L1257.2 318.4 L1259.8 322.5Z" fill="#0c880c"/><path d="M1257.2 313.3 L1256.2 312.2 L1256.2 317.3 L1257.2 318.4Z" fill="#129e12"/><path d="M1256.2 312.2 L1254.1 310.8 L1254.1 315.9 L1256.2 317.3Z" fill="#1cba1c"/><path d="M1254.1 310.8 L1243.5 301.6 L1243.5 306.7 L1254.1 315.9Z" fill="#17ac17"/><path d="M1243.5 301.6 L1232.6 293.3 L1232.6 298.4 L1243.5 306.7Z" fill="#1ab21a"/><path d="M1232.6 293.3 L1221.3 285.7 L1221.3 290.8 L1232.6 298.4Z" fill="#1cba1c"/><path d="M1221.3 285.7 L1205.8 276.9 L1205.8 282.0 L1221.3 290.8Z" fill="#1fc01f"/><path d="M1205.8 276.9 L1203.3 275.0 L1203.3 280.1 L1205.8 282.0Z" fill="#1ab21a"/><path d="M1203.3 275.0 L1197.5 273.1 L1191.4 272.4 L1189.5 272.5 L1189.5 277.6 L1191.4 277.5 L1197.5 278.2 L1203.3 280.1Z" fill="#3dda3d"/><path d="M1189.5 272.5 L1183.7 273.5 L1183.7 278.6 L1189.5 277.6Z" fill="#20c420"/><path d="M1183.7 273.5 L1178.8 275.8 L1178.8 280.9 L1183.7 278.6Z" fill="#1cba1c"/><path d="M1178.8 275.8 L1176.0 278.0 L1176.0 283.1 L1178.8 280.9Z" fill="#15a415"/><path d="M1176.0 278.0 L1173.2 281.9 L1173.2 287.0 L1176.0 283.1Z" fill="#0c880c"/><path d="M1173.2 281.9 L1143.8 351.6 L1143.8 356.7 L1173.2 287.0Z" fill="#096a09"/><path d="M1143.8 351.6 L1142.6 353.1 L1142.6 358.2 L1143.8 356.7Z" fill="#0c880c"/><path d="M1142.6 353.1 L1141.2 353.7 L1141.2 358.8 L1142.6 358.2Z" fill="#1cba1c"/><path d="M1141.2 353.7 L1139.6 353.8 L1138.0 353.3 L1138.0 358.4 L1139.6 358.9 L1141.2 358.8Z" fill="#3dda3d"/><path d="M1138.0 353.3 L1136.7 352.3 L1136.7 357.4 L1138.0 358.4Z" fill="#1ab21a"/><path d="M1136.7 352.3 L1135.6 350.5 L1135.6 355.6 L1136.7 357.4Z" fill="#0b810b"/><path d="M1135.6 350.5 L1111.0 266.1 L1111.0 271.2 L1135.6 355.6Z" fill="#096209"/><path d="M1111.0 266.1 L1108.9 261.9 L1108.9 267.0 L1111.0 271.2Z" fill="#0a790a"/><path d="M1108.9 261.9 L1106.7 259.2 L1106.7 264.3 L1108.9 267.0Z" fill="#109610"/><path d="M1106.7 259.2 L1102.7 255.7 L1102.7 260.8 L1106.7 264.3Z" fill="#17ac17"/><path d="M1102.7 255.7 L1097.9 253.0 L1097.9 258.1 L1102.7 260.8Z" fill="#1fc01f"/><path d="M1097.9 253.0 L1092.5 251.2 L1085.3 250.5 L1085.3 255.6 L1092.5 256.3 L1097.9 258.1Z" fill="#3dda3d"/><path d="M1085.3 250.5 L1083.0 251.1 L1083.0 256.2 L1085.3 255.6Z" fill="#1fc01f"/><path d="M1083.0 251.1 L1068.5 252.5 L1068.5 257.6 L1083.0 256.2Z" fill="#3dda3d"/><path d="M1068.5 252.5 L1055.3 254.8 L1042.6 257.9 L1042.6 263.0 L1055.3 259.9 L1068.5 257.6Z" fill="#20c420"/><path d="M1042.6 257.9 L1026.9 263.0 L1026.9 268.1 L1042.6 263.0Z" fill="#1fc01f"/><path d="M1026.9 263.0 L1023.8 263.5 L1023.8 268.6 L1026.9 268.1Z" fill="#20c420"/><path d="M1023.8 263.5 L1018.5 267.4 L1018.5 272.5 L1023.8 268.6Z" fill="#15a415"/><path d="M1018.5 267.4 L1015.8 271.5 L1015.8 276.6 L1018.5 272.5Z" fill="#0b810b"/><path d="M1015.8 271.5 L1015.0 274.6 L1015.0 279.7 L1015.8 276.6Z" fill="#096209"/><path d="M1088.5 355.6 L1088.0 356.7 L1088.0 361.8 L1088.5 360.7Z" fill="#0a710a"/><path d="M1088.0 356.7 L1086.8 357.5 L1086.8 362.6 L1088.0 361.8Z" fill="#17ac17"/><path d="M1086.8 357.5 L1085.2 357.8 L1085.2 362.9 L1086.8 362.6Z" fill="#20c420"/><path d="M1085.2 357.8 L1082.8 357.4 L980.1 321.7 L975.5 320.6 L969.9 320.1 L963.6 320.9 L963.6 326.0 L969.9 325.2 L975.5 325.7 L980.1 326.8 L1082.8 362.5 L1085.2 362.9Z" fill="#3dda3d"/><path d="M963.6 320.9 L960.5 316.2 L960.5 321.3 L963.6 326.0Z" fill="#0c880c"/><path d="M960.5 316.2 L958.0 313.5 L958.0 318.6 L960.5 321.3Z" fill="#129e12"/><path d="M958.0 313.5 L956.6 312.4 L956.6 317.5 L958.0 318.6Z" fill="#17ac17"/><path d="M956.6 312.4 L954.9 311.5 L954.9 316.6 L956.6 317.5Z" fill="#1fc01f"/><path d="M954.9 311.5 L953.0 311.0 L951.0 310.9 L951.0 316.0 L953.0 316.1 L954.9 316.6Z" fill="#3dda3d"/><path d="M951.0 310.9 L949.2 311.2 L949.2 316.3 L951.0 316.0Z" fill="#20c420"/><path d="M949.2 311.2 L947.7 311.9 L947.7 317.0 L949.2 316.3Z" fill="#1cba1c"/><path d="M947.7 311.9 L930.7 322.6 L930.7 327.7 L947.7 317.0Z" fill="#17ac17"/><path d="M930.7 322.6 L928.8 324.9 L928.8 330.0 L930.7 327.7Z" fill="#0d900d"/><path d="M928.8 324.9 L928.5 326.3 L928.5 331.4 L928.8 330.0Z" fill="#085308"/><path d="M947.4 345.1 L945.7 352.7 L945.7 357.8 L947.4 350.2Z" fill="#085b08"/><path d="M945.7 352.7 L944.6 360.7 L944.6 365.8 L945.7 357.8Z" fill="#085308"/><path d="M944.6 360.7 L944.2 369.0 L944.2 374.1 L944.6 365.8Z" fill="#064406"/><path d="M944.3 377.4 L943.7 379.8 L943.7 384.9 L944.3 382.5Z" fill="#085b08"/><path d="M1072.4 395.3 L1072.1 396.6 L1072.1 401.7 L1072.4 400.4Z" fill="#085b08"/><path d="M1072.1 396.6 L1070.7 398.0 L1070.7 403.1 L1072.1 401.7Z" fill="#109610"/><path d="M1070.7 398.0 L992.4 446.2 L992.4 451.3 L1070.7 403.1Z" fill="#17ac17"/><path d="M992.4 446.2 L989.4 448.7 L989.4 453.8 L992.4 451.3Z" fill="#129e12"/><path d="M989.4 448.7 L986.7 452.2 L986.7 457.3 L989.4 453.8Z" fill="#0c880c"/><path d="M986.7 452.2 L985.3 457.6 L985.3 462.7 L986.7 457.3Z" fill="#096209"/><path d="M1217.4 505.9 L1216.4 507.4 L1216.4 512.5 L1217.4 511.0Z" fill="#0c880c"/><path d="M1216.4 507.4 L1203.8 511.8 L1192.3 515.1 L1192.3 520.2 L1203.8 516.9 L1216.4 512.5Z" fill="#1fc01f"/><path d="M1192.3 515.1 L1180.3 517.6 L1171.0 519.0 L1171.0 524.1 L1180.3 522.7 L1192.3 520.2Z" fill="#20c420"/><path d="M1171.0 519.0 L1157.2 520.3 L1155.0 519.7 L1155.0 524.8 L1157.2 525.4 L1171.0 524.1Z" fill="#3dda3d"/><path d="M1155.0 519.7 L1151.5 517.5 L1151.5 522.6 L1155.0 524.8Z" fill="#1cba1c"/><path d="M1151.5 517.5 L1150.4 516.0 L1150.4 521.1 L1151.5 522.6Z" fill="#109610"/><path d="M1150.4 516.0 L1149.5 514.0 L1149.5 519.1 L1150.4 521.1Z" fill="#0a710a"/><path d="M1149.5 514.0 L1124.6 428.9 L1124.6 434.0 L1149.5 519.1Z" fill="#096209"/><path d="M1124.6 428.9 L1121.7 424.2 L1121.7 429.3 L1124.6 434.0Z" fill="#0c880c"/><path d="M1121.7 424.2 L1116.9 420.5 L1116.9 425.6 L1121.7 429.3Z" fill="#1ab21a"/><path d="M1116.9 420.5 L1114.2 419.1 L1114.2 424.2 L1116.9 425.6Z" fill="#1fc01f"/><path d="M1114.2 419.1 L1108.0 417.3 L1101.8 417.4 L1101.8 422.5 L1108.0 422.4 L1114.2 424.2Z" fill="#3dda3d"/><path d="M1101.8 417.4 L1099.0 418.0 L1099.0 423.1 L1101.8 422.5Z" fill="#20c420"/><path d="M1099.0 418.0 L1093.9 420.4 L1093.9 425.5 L1099.0 423.1Z" fill="#1cba1c"/><path d="M1093.9 420.4 L1090.6 424.2 L1090.6 429.3 L1093.9 425.5Z" fill="#0d900d"/><path d="M1090.6 424.2 L1060.9 494.7 L1060.9 499.8 L1090.6 429.3Z" fill="#0a710a"/><path d="M1060.9 494.7 L1059.7 496.5 L1059.7 501.6 L1060.9 499.8Z" fill="#0b810b"/><path d="M1059.7 496.5 L1058.2 497.7 L1058.2 502.8 L1059.7 501.6Z" fill="#15a415"/><path d="M1058.2 497.7 L1056.2 498.5 L1056.2 503.6 L1058.2 502.8Z" fill="#1cba1c"/><path d="M1056.2 498.5 L1054.0 498.8 L1051.7 498.6 L1051.7 503.7 L1054.0 503.9 L1056.2 503.6Z" fill="#3dda3d"/><path d="M1051.7 498.6 L1036.1 490.0 L1036.1 495.1 L1051.7 503.7Z" fill="#1fc01f"/><path d="M1036.1 490.0 L1028.0 484.9 L1028.0 490.0 L1036.1 495.1Z" fill="#1cba1c"/><path d="M1028.0 484.9 L1017.7 477.6 L1017.7 482.7 L1028.0 490.0Z" fill="#1ab21a"/><path d="M1017.7 477.6 L1010.4 471.8 L1000.2 462.8 L1000.2 467.9 L1010.4 476.9 L1017.7 482.7Z" fill="#17ac17"/><path d="M1000.2 462.8 L999.5 461.0 L999.5 466.1 L1000.2 467.9Z" fill="#0a710a"/><path d="M1086.6 397.5 L1086.4 395.2 L1086.4 400.3 L1086.6 402.6Z" fill="#074b07"/><path d="M1086.4 395.2 L1084.6 390.3 L1084.6 395.4 L1086.4 400.3Z" fill="#096a09"/><path d="M1084.6 390.3 L1079.5 385.0 L1079.5 390.1 L1084.6 395.4Z" fill="#129e12"/><path d="M1079.5 385.0 L1072.3 381.7 L1072.3 386.8 L1079.5 390.1Z" fill="#20c420"/><path d="M1072.3 381.7 L1066.0 380.9 L968.7 386.9 L965.9 386.8 L963.6 386.2 L963.6 391.3 L965.9 391.9 L968.7 392.0 L1066.0 386.0 L1072.3 386.8Z" fill="#3dda3d"/><path d="M963.6 386.2 L961.5 385.1 L961.5 390.2 L963.6 391.3Z" fill="#1fc01f"/><path d="M961.5 385.1 L959.8 383.7 L959.8 388.8 L961.5 390.2Z" fill="#17ac17"/><path d="M959.8 383.7 L958.5 382.1 L958.5 387.2 L959.8 388.8Z" fill="#0d900d"/><path d="M1102.7 358.5 L1102.0 352.4 L1102.0 357.5 L1102.7 363.6Z" fill="#074b07"/><path d="M1102.0 352.4 L1098.0 346.7 L1098.0 351.8 L1102.0 357.5Z" fill="#0d900d"/><path d="M1098.0 346.7 L1031.5 283.3 L1031.5 288.4 L1098.0 351.8Z" fill="#15a415"/><path d="M1031.5 283.3 L1029.9 281.3 L1029.9 286.4 L1031.5 288.4Z" fill="#109610"/><path d="M1029.9 281.3 L1029.2 279.5 L1029.2 284.6 L1029.9 286.4Z" fill="#0a710a"/><path d="M1029.2 279.5 L1029.0 277.7 L1029.0 282.8 L1029.2 284.6Z" fill="#074b07"/><path d="M1247.2 321.3 L1246.9 324.5 L1246.9 329.6 L1247.2 326.4Z" fill="#074b07"/><path d="M1246.9 324.5 L1245.9 325.9 L1245.9 331.0 L1246.9 329.6Z" fill="#0b810b"/><path d="M1245.9 325.9 L1244.3 327.2 L1244.3 332.3 L1245.9 331.0Z" fill="#129e12"/><path d="M1244.3 327.2 L1166.1 375.4 L1166.1 380.5 L1244.3 332.3Z" fill="#17ac17"/><path d="M1166.1 375.4 L1161.7 379.9 L1161.7 385.0 L1166.1 380.5Z" fill="#109610"/><path d="M1161.7 379.9 L1160.5 384.6 L1160.5 389.7 L1161.7 385.0Z" fill="#085b08"/><path d="M1288.1 411.4 L1287.7 418.8 L1287.7 423.9 L1288.1 416.5Z" fill="#064406"/><path d="M1287.7 418.8 L1286.7 426.2 L1286.7 431.3 L1287.7 423.9Z" fill="#085308"/><path d="M1286.7 426.2 L1285.1 433.5 L1285.1 438.6 L1286.7 431.3Z" fill="#085b08"/><path d="M1285.1 433.5 L1283.0 440.7 L1283.0 445.8 L1285.1 438.6Z" fill="#096209"/><path d="M1283.0 440.7 L1280.0 448.7 L1280.0 453.8 L1283.0 445.8Z" fill="#096a09"/><path d="M1280.0 448.7 L1278.5 449.7 L1278.5 454.8 L1280.0 453.8Z" fill="#15a415"/><path d="M1278.5 449.7 L1274.8 450.7 L1274.8 455.8 L1278.5 454.8Z" fill="#20c420"/><path d="M1274.8 450.7 L1272.7 450.6 L1270.2 450.0 L1166.1 414.0 L1159.8 413.1 L1159.8 418.2 L1166.1 419.1 L1270.2 455.1 L1272.7 455.7 L1274.8 455.8Z" fill="#3dda3d"/><path d="M1159.8 413.1 L1152.5 414.4 L1152.5 419.5 L1159.8 418.2Z" fill="#20c420"/><path d="M1152.5 414.4 L1147.0 418.1 L1147.0 423.2 L1152.5 419.5Z" fill="#17ac17"/><path d="M1147.0 418.1 L1144.4 423.5 L1144.4 428.6 L1147.0 423.2Z" fill="#0a710a"/><path d="M1217.9 504.2 L1217.4 505.9 L1217.4 511.0 L1217.9 509.3Z" fill="#096209"/><path d="M952.0 329.0 L951.1 332.9 L951.1 338.0 L952.0 334.1Z" fill="#085b08"/><path d="M951.1 332.9 L945.8 328.3 L945.8 333.4 L951.1 338.0Z" fill="#17ac17"/></g><path d="M1066.0 392.2 L1070.8 392.7 L1075.2 394.8 L1078.3 398.0 L1079.6 401.7 L1078.8 405.3 L1076.1 408.1 L997.3 456.6 L994.8 458.6 L993.1 461.1 L992.3 464.0 L992.5 467.0 L993.6 470.0 L995.5 472.8 L996.0 472.5 L998.3 474.7 L1000.7 476.9 L1003.1 479.0 L1005.5 481.1 L1008.0 483.2 L1010.5 485.2 L1013.1 487.2 L1015.8 489.2 L1018.4 491.1 L1021.1 493.0 L1023.9 494.8 L1026.7 496.6 L1029.5 498.4 L1032.4 500.1 L1035.3 501.8 L1038.2 503.5 L1041.2 505.1 L1044.1 506.7 L1047.2 508.2 L1046.9 508.7 L1051.0 509.9 L1055.3 510.3 L1059.3 509.7 L1062.9 508.2 L1065.7 506.0 L1067.5 503.2 L1096.8 433.4 L1099.1 430.5 L1103.1 428.8 L1107.8 428.6 L1112.4 430.1 L1116.1 432.8 L1118.2 436.4 L1142.7 520.7 L1144.0 523.6 L1146.2 526.4 L1149.1 528.7 L1152.5 530.4 L1156.2 531.5 L1160.0 531.9 L1160.0 531.5 L1163.3 531.3 L1166.5 531.0 L1169.8 530.7 L1173.1 530.3 L1176.3 529.9 L1179.5 529.4 L1182.7 528.9 L1185.9 528.3 L1189.0 527.6 L1192.1 527.0 L1195.2 526.2 L1198.3 525.4 L1201.3 524.6 L1204.3 523.7 L1207.3 522.8 L1210.2 521.8 L1213.1 520.8 L1216.0 519.7 L1218.8 518.6 L1219.3 519.2 L1222.2 517.1 L1224.1 514.3 L1225.0 511.2 L1224.7 507.9 L1223.3 504.6 L1220.9 501.6 L1154.2 438.1 L1151.8 434.6 L1151.4 430.9 L1153.0 427.5 L1156.3 425.3 L1160.8 424.4 L1165.6 425.3 L1268.6 461.0 L1272.3 461.9 L1276.2 462.1 L1279.8 461.6 L1283.0 460.3 L1285.7 458.5 L1287.6 456.1 L1287.0 455.9 L1288.0 453.5 L1288.9 451.1 L1289.8 448.6 L1290.6 446.2 L1291.4 443.7 L1292.0 441.2 L1292.6 438.7 L1293.2 436.1 L1293.7 433.6 L1294.1 431.0 L1294.4 428.5 L1294.7 425.9 L1294.9 423.3 L1295.1 420.7 L1295.2 418.1 L1295.2 415.4 L1295.1 412.8 L1295.0 410.2 L1294.8 407.5 L1295.6 407.5 L1294.4 404.3 L1292.1 401.2 L1288.9 398.7 L1285.1 396.8 L1281.0 395.7 L1276.7 395.5 L1181.0 401.6 L1176.2 401.1 L1171.8 399.0 L1168.7 395.8 L1167.5 392.1 L1168.3 388.5 L1171.0 385.8 L1249.4 337.4 L1251.9 335.4 L1253.6 332.9 L1254.3 330.0 L1254.2 327.0 L1253.1 324.1 L1251.2 321.3 L1250.7 321.5 L1248.4 319.3 L1246.1 317.2 L1243.7 315.0 L1241.2 313.0 L1238.8 310.9 L1236.2 308.9 L1233.7 306.9 L1231.0 304.9 L1228.4 303.0 L1225.7 301.1 L1223.0 299.3 L1220.2 297.4 L1217.4 295.7 L1214.5 293.9 L1211.6 292.2 L1208.7 290.6 L1205.8 289.0 L1202.8 287.4 L1199.8 285.9 L1200.1 285.3 L1195.9 284.1 L1191.7 283.8 L1187.7 284.3 L1184.1 285.8 L1181.3 288.0 L1179.5 290.8 L1150.3 360.4 L1147.9 363.3 L1144.0 365.1 L1139.3 365.2 L1134.7 363.7 L1131.0 361.0 L1128.9 357.4 L1104.4 273.1 L1103.1 270.1 L1100.9 267.4 L1098.0 265.1 L1094.6 263.3 L1090.9 262.2 L1087.0 261.8 L1087.1 262.3 L1083.8 262.5 L1080.5 262.7 L1077.3 263.0 L1074.0 263.4 L1070.8 263.8 L1067.6 264.3 L1064.4 264.8 L1061.2 265.4 L1058.0 266.0 L1054.9 266.7 L1051.8 267.4 L1048.7 268.2 L1045.7 269.0 L1042.7 269.9 L1039.7 270.8 L1036.8 271.8 L1033.9 272.8 L1031.0 273.8 L1028.1 275.0 L1027.6 274.4 L1024.7 276.5 L1022.8 279.2 L1021.9 282.4 L1022.2 285.7 L1023.6 289.0 L1026.0 292.0 L1092.9 355.7 L1095.3 359.2 L1095.7 362.9 L1094.1 366.3 L1090.7 368.5 L1086.3 369.3 L1081.5 368.5 L978.1 332.6 L974.3 331.7 L970.4 331.5 L966.8 332.0 L963.5 333.2 L960.8 335.1 L958.9 337.5 L959.5 337.7 L958.5 340.1 L957.5 342.5 L956.6 345.0 L955.8 347.4 L955.1 349.9 L954.4 352.4 L953.8 355.0 L953.2 357.5 L952.8 360.1 L952.3 362.6 L952.0 365.2 L951.7 367.8 L951.5 370.4 L951.3 373.0 L951.2 375.6 L951.2 378.3 L951.3 380.9 L951.4 383.6 L951.6 386.2 L950.8 386.2 L952.0 389.5 L954.3 392.6 L957.5 395.1 L961.3 397.0 L965.5 398.1 L969.8 398.3ZM935.6 333.0 L952.4 347.6 L954.3 346.1 L956.0 344.3 L957.3 342.4 L958.3 340.3 L958.9 338.0 L959.1 335.7 L958.9 333.4 L958.4 331.0 L957.4 328.7 L956.1 326.4 L954.5 324.3 L952.6 322.3 L935.6 333.0Z" fill="none" stroke="#00ff00" stroke-width="1"/><path d="M1199.4 112 L1164.9 242.4" stroke="#ff0000" stroke-width="1" stroke-dasharray="4 4" fill="none"/><path d="M1164.9 242.4 L944 321 M939.5 320 L995.5 112" stroke="#00ff00" stroke-width="1" stroke-dasharray="4 5" fill="none"/><rect x="751" y="112" width="13.5" height="13" fill="#fff"/><text x="757.5" y="122.8" font-family="Liberation Sans,sans-serif" font-size="12" fill="#000" text-anchor="middle" shape-rendering="auto">2</text></svg>
<div class="sep" style="top:144px;border-top-color:#dcdcdc"></div>
<div class="sep" style="top:297px"></div>
<div class="sep" style="top:371px"></div>
<div class="sep" style="top:426px"></div>
<div class="sep" style="top:478px"></div>
<div class="sep" style="top:508px"></div>
<div class="sep" style="top:608px"></div>
<svg class="abs" style="left:9px;top:112px" width="75" height="400" viewBox="9 112 75 400">
<path d="M33.8 119.2 L26.2 126.8 L33.8 134.3 L33.8 130.6 L30 126.8 L33.8 123Z" fill="#000"/>
<path d="M60 124 L62.8 126.6 L67 120.6 M60 130.6 L62.8 133.4 L67 127.4" fill="none" stroke="#000" stroke-width="1.9"/>
<g fill="#955252"><path d="M48.6 151 L54.2 157 L51 157 L51 162 L46.2 162 L46.2 157 L43 157Z"/><circle cx="48.6" cy="168.4" r="2.6"/><path d="M48.6 186 L54.2 180 L51 180 L51 175 L46.2 175 L46.2 180 L43 180Z"/><path d="M17 168.4 L23 162.8 L23 166 L34 166 L34 170.8 L23 170.8 L23 174Z"/><path d="M80 168.4 L74 162.8 L74 166 L63 166 L63 170.8 L74 170.8 L74 174Z"/></g>
<g fill="none" stroke="#2e7b32" stroke-width="3.3"><path d="M20.6 207.4 Q26.5 214.8 33.9 205.8"/><path d="M76.2 207.4 Q70.3 214.8 62.9 205.8"/><path d="M50.4 194.2 L45.9 198 L50 202.6"/><path d="M50.4 222.6 L45.9 218.8 L50 214.2"/></g>
<g fill="#2e7b32"><path d="M17.7 203.9 L25.2 204.1 L18 211.4Z"/><path d="M79.1 203.9 L71.6 204.1 L78.8 211.4Z"/><path d="M45 191 L52 191 L52 198Z"/><path d="M45 225.9 L52 225.9 L52 218.9Z"/><circle cx="48.4" cy="208.4" r="2.6"/></g>
<rect x="18.5" y="232.5" width="7" height="10" rx="1.5" fill="#fff" stroke="#8a8a8a" stroke-width="1"/><text x="22.0" y="240.7" font-family="Liberation Sans,sans-serif" font-size="9.5" text-anchor="middle" fill="#000">I</text>
<path d="M35.8 233 L35.8 244 M30.3 238.5 L41.5 238.5" stroke="#3232c8" stroke-width="3.4"/>
<rect x="52.5" y="232.5" width="8" height="10" rx="1.5" fill="#fff" stroke="#8a8a8a" stroke-width="1"/><text x="56.5" y="240.7" font-family="Liberation Sans,sans-serif" font-size="9.5" text-anchor="middle" fill="#000">Z</text>
<rect x="63.7" y="235" width="12.4" height="8" fill="none" stroke="#3232c8" stroke-width="1.4"/>
<rect x="18.5" y="254.5" width="10" height="10" rx="1.5" fill="#fff" stroke="#8a8a8a" stroke-width="1"/><text x="23.5" y="262.7" font-family="Liberation Sans,sans-serif" font-size="9.5" text-anchor="middle" fill="#000">U</text>
<path d="M30.3 260.6 L41.5 260.6" stroke="#3232c8" stroke-width="3.4"/>
<rect x="52.5" y="254.5" width="10" height="10" rx="1.5" fill="#fff" stroke="#8a8a8a" stroke-width="1"/><text x="57.5" y="262.7" font-family="Liberation Sans,sans-serif" font-size="9.5" text-anchor="middle" fill="#000">O</text>
<circle cx="69" cy="260" r="4.6" fill="none" stroke="#3232c8" stroke-width="1.5"/><circle cx="69" cy="260" r="1.2" fill="#3232c8"/><path d="M72.5 263.5 L76.6 267.6" stroke="#3232c8" stroke-width="1.8"/>
<rect x="18.5" y="277" width="13" height="10" rx="1.5" fill="#fff" stroke="#8a8a8a" stroke-width="1"/><text x="25.0" y="285.2" font-family="Liberation Sans,sans-serif" font-size="9.5" text-anchor="middle" fill="#000">Bk</text>
<path d="M34.5 280.5 Q41.5 275.5 42 283 Q41.5 287 37 289.8" fill="none" stroke="#222" stroke-width="1.7"/><path d="M32 283.5 L33.2 277.2 L38 281.2Z" fill="#222"/>
<path d="M69.5 280.5 Q62.5 275.5 62 283 Q62.5 287 67 289.8" fill="none" stroke="#aaa" stroke-width="1.7"/><path d="M72 283.5 L70.8 277.2 L66 281.2Z" fill="#aaa"/>
<g fill="#3a3a3a"><circle cx="31.1" cy="312.9" r="4.3"/><path d="M58 307.8 L63.8 312.9 L58 318Z"/><rect x="64.2" y="307.8" width="1.8" height="10.2"/><path d="M72.2 307.8 L66.4 312.9 L72.2 318Z"/><path d="M24 333 L32 333 L32 329.8 L38.2 334.9 L32 340 L32 336.8 L24 336.8Z"/><path d="M61.2 329.4 L68.8 336.4 L71.4 333.4 L71.4 341.2 L63 341.2 L66.2 338.6 L58.8 331.8Z"/><path d="M29.2 350 L33 350 L33 358 L36.2 358 L31.1 364 L26 358 L29.2 358Z"/><path d="M68.8 350.8 L61.6 358 L58.8 355 L58.8 363 L67 363 L64 360.4 L71.2 353.2Z"/></g>
<path d="M27 383.2 Q32.5 380.2 36 384 Q38.8 388.5 35 391 Q31 393.4 27.5 390.4" fill="none" stroke="#111" stroke-width="1.5"/><path d="M23.4 385.4 L29.6 381 L29.2 387.8Z" fill="#111"/>
<path d="M62 385 L67.4 385 L64.7 388.2Z" fill="#111"/>
<rect x="21" y="407" width="53" height="3" fill="#e4e4e4" stroke="#c8c8c8" stroke-width=".8"/>
<defs><linearGradient id="th" x1="0" y1="0" x2="0" y2="1"><stop offset="0" stop-color="#f6f6f6"/><stop offset=".55" stop-color="#e0e0e0"/><stop offset="1" stop-color="#c8c8c8"/></linearGradient></defs>
<path d="M32.7 401.5 Q32.7 400.6 33.6 400.6 L40.6 400.6 Q41.5 400.6 41.5 401.5 L41.5 412.6 L37.1 417.3 L32.7 412.6Z" fill="url(#th)" stroke="#9a9a9a" stroke-width=".9"/>
<path d="M24.5 435.5 L37.8 435.5 L37.8 440.6 L29.6 440.6 L29.6 448.6 L24.5 448.6Z" fill="#c8c8c8" stroke="#333" stroke-width="1.1"/><path d="M27 436 v2.6 M30 436 v2 M33 436 v2.6 M35.6 436 v2 M25 442.6 h2 M25 445.4 h2.6" stroke="#333" stroke-width=".9" fill="none"/>
<path d="M59.5 434 v14.6 M62.7 434 v14.6 M65.9 434 v14.6 M69.1 434 v14.6 M57 436.6 h14.6 M57 439.8 h14.6 M57 443 h14.6 M57 446.2 h14.6" stroke="#111" stroke-width="1.1" fill="none"/>
<path d="M28.4 461.4 L36.8 469.6" stroke="#000" stroke-width="3.1" stroke-linecap="round"/><circle cx="28" cy="460.6" r="3.9" fill="#000"/><path d="M23.6 456.4 L27.9 460.6 L30 458.4 L26.2 454.6Z" fill="#f0f0f0"/>
<rect x="52" y="457.4" width="13.6" height="13.2" fill="#7c7c00" stroke="#4a4a00" stroke-width=".8"/><rect x="54.6" y="458" width="8.4" height="6" fill="#c0c0c0"/><rect x="54" y="465.6" width="9.4" height="5" fill="#000"/><rect x="60.4" y="466.6" width="2" height="3.2" fill="#c0c0c0"/>
<path d="M72.7 462 L78.2 462 L75.45 465.3Z" fill="#000"/>
<rect x="20.1" y="489.3" width="3" height="2.6" fill="#ff0000"/><text x="22.4" y="501.8" font-family="Liberation Sans,sans-serif" font-size="8.8" fill="#000">3D</text>
<path d="M38.9 491.8 L44.4 491.8 L41.65 495.1Z" fill="#000"/>
<g fill="#a8a8a8"><rect x="55" y="489.6" width="8.6" height="1.6"/><rect x="57.6" y="487.8" width="3.4" height="1.6"/><path d="M55.6 492 L63 492 L62.2 501 L56.4 501Z"/></g>
<path d="M72.7 492.2 L78.2 492.2 L75.45 495.3Z" fill="#a8a8a8"/>
</svg>
<div class="abs" style="left:17px;top:512px;font-size:11px;line-height:14px;white-space:nowrap;letter-spacing:-.15px">Px : 0.3208</div>
<div class="coord" style="top:530px">X : 46.575</div>
<div class="coord" style="top:549px">Y : -78.854</div>
<div class="coord" style="top:568px">R : 91.582</div>
<div class="coord" style="top:587px">A : 300.57</div>
<div class="abs" style="left:85px;top:660px;width:1328px;height:1px;background:#fff"></div>
<svg class="abs" style="left:95px;top:668px" width="170" height="20" viewBox="95 668 170 20">
<path d="M101 677.2 L113.2 677.2 M107.1 671.2 L107.1 683.2" stroke="#000" stroke-width="1.9"/>
<path d="M121.6 675.8 L127.2 675.8 L124.4 678.6Z" fill="#000"/>
<path d="M140.2 672.2 L151.2 683.2 M151.2 672.2 L140.2 683.2" stroke="#000" stroke-width="2.6"/>
<path d="M168.3 671.2 L175.6 678 L168.3 684.8Z M176 671.2 L184 678 L176 684.8Z" fill="#000"/>
<rect x="200.2" y="671.7" width="11.4" height="12.6" fill="#fff" stroke="#000" stroke-width="1"/><path d="M202 674.6 h6 M202 677.2 h4 M202 679.8 h3 M206 681.8 h4" stroke="#555" stroke-width=".8"/><path d="M203 682 L210 674.4" stroke="#000" stroke-width="1.5"/>
<path d="M239.8 671.2 L247.4 678 L239.8 684.8Z M248 671.2 L256.4 678 L248 684.8Z" fill="#127812"/>
</svg>
<div class="abs" style="left:277px;top:670px;font-size:11px;line-height:14px;white-space:nowrap">CNC command</div>
<div class="abs" style="left:382px;top:667px;width:1025px;height:20px;background:#fff;border:1px solid #e2e3ea;border-top-color:#abadb3;border-radius:2px"></div>
<svg class="abs" style="left:1392px;top:673px" width="12" height="8"><path d="M2.4 1.8 L9.6 1.8 L6 5.8Z" fill="#000"/></svg>
<div class="abs" style="left:94px;top:694px;width:169px;height:239px;border:1px solid #828790;background:#fff"></div>
<div class="abs" style="left:96px;top:696px;width:165px;height:17px;border:1px solid #d4d4d4;border-radius:2px;background:linear-gradient(180deg,#f8f8f8,#e6e6e6)"></div>
<svg class="abs" style="left:103px;top:699px" width="11" height="10"><path d="M.8 1 L4.6 4.6 L.8 8.2Z M5 1 L9.2 4.6 L5 8.2Z" fill="#000"/></svg>
<div class="abs" style="left:117px;top:698px;font-size:11px;line-height:14px;white-space:nowrap;letter-spacing:-.1px">L3P1.xpi</div>
<div id="code"><div class="abs" style="left:1px;top:218px;width:1115px;height:18px;border:1px solid #dadada;border-radius:2px;background:linear-gradient(180deg,#fafafa,#e8e8e8)"></div><pre>N340
N350
N360    L0 = L0-60
N370    G79 L0 &gt; -330 N184
N380    G03 XL1 Y32.5 IL1 JL2 R10 ES-
N385    G01 XL1 YL2
N390    G00 Z200
N400    G00 X0 Y0

N410    M05 M09                 (Spindle Off, Coolant Off)


N900    M0</pre>
<div class="abs" style="left:1115px;top:0;width:17px;height:237px;background:#f0f0f0"></div>
<svg class="abs" style="left:1115px;top:0" width="17" height="237"><path d="M5 11.6 L8.5 8 L12 11.6Z" fill="#333"/><path d="M5 225.4 L8.5 229 L12 225.4Z" fill="#333"/><rect x="2.5" y="176.5" width="12" height="40" rx="2" fill="#e8e8e8" stroke="#979797"/><rect x="3.5" y="177.5" width="5" height="38" fill="#f4f4f4"/><path d="M5.5 193 h6 M5.5 196 h6 M5.5 199 h6" stroke="#777" stroke-width="1"/></svg>
</div>
<div class="hline" style="left:9px;top:940px;width:1404px"></div>
<div class="hline" style="left:9px;top:1039px;width:1404px;background:#8c8c8c"></div>
<div class="fk up" style="left:9px;width:127px">
<div class="k">F1</div>
<svg width="36" height="34" viewBox="0 0 36 34" style="left:46px;top:28px"><g transform="translate(0 0)"><path d="M8 22.5 Q4 23.5 2.2 26.6" fill="none" stroke="#2030e0" stroke-width="1.3"/><path d="M7.4 20.6 L24.6 7 L32 14.6 L14.4 29 Z" fill="#f2e4e4" stroke="#b06060" stroke-width="1"/><path d="M7.4 20.6 L14.4 29 L14 24.6 L10 20 Z" fill="#d8c8c8" stroke="#b06060" stroke-width=".8"/><path d="M11.6 20.4 L25.4 9.6 L29.6 14 L15.6 25.2 Z" fill="#9a9a9a"/><path d="M14.4 21.6 L27 11.6 L28.6 13.4 L16 23.4 Z" fill="#111"/></g></svg>
<div class="t" style="width:127px">Help</div>
</div>
<div class="fk" style="left:136px;width:128px">
<div class="k">F2</div>
<svg width="36" height="34" viewBox="0 0 36 34" style="left:47px;top:28px"><g transform="translate(2.5 0)"><rect x="2.5" y="2.2" width="7.6" height="7.6" fill="#fff" stroke="#000" stroke-width="1.1"/><path d="M4.2 6.2 L5.8 8.0 L8.6 4.0" fill="none" stroke="#000" stroke-width="1.3"/><rect x="13.2" y="2.2" width="13.6" height="7.6" fill="#fff" stroke="#000" stroke-width="1.1"/><rect x="2.5" y="12.2" width="7.6" height="7.6" fill="#fff" stroke="#000" stroke-width="1.1"/><path d="M4.2 16.2 L5.8 18.0 L8.6 14.0" fill="none" stroke="#000" stroke-width="1.3"/><rect x="13.2" y="12.2" width="13.6" height="7.6" fill="#fff" stroke="#000" stroke-width="1.1"/><rect x="2.5" y="22.2" width="7.6" height="7.6" fill="#fff" stroke="#000" stroke-width="1.1"/><path d="M4.2 26.2 L5.8 28.0 L8.6 24.0" fill="none" stroke="#000" stroke-width="1.3"/><rect x="13.2" y="22.2" width="13.6" height="7.6" fill="#fff" stroke="#000" stroke-width="1.1"/></g></svg>
<div class="t" style="width:128px">Options</div>
</div>
<div class="fk" style="left:264px;width:128px">
<div class="k">F3</div>
<svg width="36" height="34" viewBox="0 0 36 34" style="left:47px;top:28px"><rect x="1.5" y="1" width="31" height="31.6" rx="4" fill="#00e400" stroke="#0b8f0b" stroke-width="1.2"/><path d="M8 11 L8 7.4 Q8 5.6 9.8 5.6 L22 5.6 M26 9.4 L26 22 M26 22 M22 27.6 L9.8 27.6 M8 24 L8 11" fill="none" stroke="#000" stroke-width="2"/><path d="M26 9.4 Q26 5.6 22.6 5.6 M26 23 Q26 27.6 22 27.6 M8 23.6 Q8 27.6 10 27.6" fill="none" stroke="#000" stroke-width="2"/><path d="M21.4 2.8 L25.4 5.6 L21.4 8.4Z M23.2 21.6 L26 25.6 L28.8 21.6Z M12.6 24.8 L8.6 27.6 L12.6 30.4Z M5.2 11.6 L8 7.6 L10.8 11.6Z" fill="#000"/></svg>
<div class="t" style="width:128px">Start</div>
</div>
<div class="fk dis" style="left:392px;width:128px">
<div class="k">F4</div>
<svg width="36" height="34" viewBox="0 0 36 34" style="left:47px;top:28px"><path d="M6.5 21 L22.8 6.2 M13.3 26.4 L28.8 11.5" stroke="#9c9c9c" stroke-width="1.7" fill="none"/></svg>
<div class="t" style="width:128px">Reset</div>
</div>
<div class="fk" style="left:520px;width:128px">
<div class="k">F5</div>
<svg width="36" height="34" viewBox="0 0 36 34" style="left:47px;top:28px"><path d="M2.7 7.2 L24 7.2 M2.7 25 L24 25" stroke="#3c3c3c" stroke-width="1.6"/><path d="M23.6 6.4 L33.6 16 L23.6 25.8Z" fill="#3c3c3c"/><rect x="8.6" y="9.6" width="13.6" height="13" fill="#3c3c3c"/><rect x="11" y="12" width="8.8" height="8.2" fill="#c4c4c4"/><path d="M12.4 16.1 L17 16.1 M15.4 13.6 L18 16.1 L15.4 18.6" fill="none" stroke="#222" stroke-width="1.3"/></svg>
<div class="t" style="width:128px">Single block</div>
</div>
<div class="fk up" style="left:648px;width:128px">
<div class="k">F6</div>
<svg width="36" height="34" viewBox="0 0 36 34" style="left:47px;top:28px"><rect x="4.3" y="3" width="27.4" height="25.6" fill="#fff" stroke="#000" stroke-width="1.2"/><path d="M8 7 h20 M8 10.6 h20 M8 14.2 h20 M8 17.8 h20 M8 21.4 h20 M8 25 h20" stroke="#000" stroke-width="1.5"/></svg>
<div class="t" style="width:128px">CNC program</div>
</div>
<div class="fk" style="left:776px;width:127px">
<div class="k">F7</div>
<svg width="36" height="34" viewBox="0 0 36 34" style="left:46px;top:28px"><rect x="1.6" y="1.2" width="30.6" height="28.4" fill="#fff" stroke="#000" stroke-width="1.2"/><rect x="2.2" y="1.8" width="29.4" height="3.6" fill="#b4b4b4"/><path d="M1.6 5.6 h30.6 M1.6 9.6 h30.6 M1.6 13.6 h30.6 M1.6 17.6 h30.6 M1.6 21.6 h30.6 M1.6 25.6 h30.6 M11.6 1.2 v28.4 M21.6 1.2 v28.4" stroke="#000" stroke-width="1.1"/></svg>
<div class="t" style="width:127px">Tools</div>
</div>
<div class="fk" style="left:903px;width:128px">
<div class="k">F8</div>
<svg width="36" height="34" viewBox="0 0 36 34" style="left:47px;top:28px"><path d="M1.8 1.4 L20.6 1.4 L29.6 9.4 L10 9.4Z" fill="#8a8a8a" stroke="#222" stroke-width=".8"/><path d="M1.8 1.4 L10 9.4 L10 29.4 L1.8 21.4Z" fill="#b8b8b8" stroke="#222" stroke-width=".8"/><rect x="10" y="9.4" width="19.6" height="20" fill="#0000f0" stroke="#222" stroke-width=".8"/></svg>
<div class="t" style="width:128px">Blank</div>
</div>
<div class="fk" style="left:1031px;width:128px">
<div class="k">F9</div>
<svg width="36" height="34" viewBox="0 0 36 34" style="left:47px;top:28px"><rect x="1.6" y="1.2" width="29.6" height="28.8" fill="#cfcfcf" stroke="#000" stroke-width="1.3"/><rect x="4.2" y="3.6" width="20.4" height="13.6" fill="#fff" stroke="#000" stroke-width="1.2"/><rect x="7.4" y="20.6" width="1.8" height="1.8" fill="#000"/><rect x="10.3" y="20.6" width="1.8" height="1.8" fill="#000"/><rect x="13.2" y="20.6" width="1.8" height="1.8" fill="#000"/><rect x="16.1" y="20.6" width="1.8" height="1.8" fill="#000"/><rect x="19.0" y="20.6" width="1.8" height="1.8" fill="#000"/><rect x="21.9" y="20.6" width="1.8" height="1.8" fill="#000"/><rect x="24.799999999999997" y="20.6" width="1.8" height="1.8" fill="#000"/><rect x="27.700000000000003" y="20.6" width="1.8" height="1.8" fill="#000"/><rect x="7.4" y="24.4" width="1.8" height="1.8" fill="#000"/><rect x="10.3" y="24.4" width="1.8" height="1.8" fill="#000"/><rect x="13.2" y="24.4" width="1.8" height="1.8" fill="#000"/><rect x="16.1" y="24.4" width="1.8" height="1.8" fill="#000"/><rect x="19.0" y="24.4" width="1.8" height="1.8" fill="#000"/><rect x="21.9" y="24.4" width="1.8" height="1.8" fill="#000"/><rect x="24.799999999999997" y="24.4" width="1.8" height="1.8" fill="#000"/><rect x="27.700000000000003" y="24.4" width="1.8" height="1.8" fill="#000"/><rect x="26.6" y="4.6" width="1.8" height="1.8" fill="#000"/><rect x="26.6" y="7.699999999999999" width="1.8" height="1.8" fill="#000"/><rect x="26.6" y="10.8" width="1.8" height="1.8" fill="#000"/><rect x="26.6" y="13.9" width="1.8" height="1.8" fill="#000"/><circle cx="5" cy="23" r="1.9" fill="#e00000"/></svg>
<div class="t" style="width:128px">CNC config.</div>
</div>
<div class="fk" style="left:1159px;width:128px">
<div class="k k3">F10</div>
</div>
<div class="fk" style="left:1287px;width:128px">
<div class="k k3">F11</div>
<svg width="36" height="34" viewBox="0 0 36 34" style="left:47px;top:28px"><g transform="rotate(42 17 17)"><rect x="-3" y="14" width="40" height="7" fill="#5c5c5c"/><path d="M0 14 v3 M4 14 v2 M8 14 v3 M12 14 v2 M16 14 v3 M20 14 v2 M24 14 v3 M28 14 v2 M32 14 v3" stroke="#bdbdbd" stroke-width=".8"/></g><g transform="rotate(-42 17 17)"><rect x="2" y="13.4" width="27" height="7.6" fill="#7c7c7c"/><rect x="2" y="13.4" width="27" height="2.6" fill="#9c9c9c"/><rect x="29" y="13.4" width="3" height="7.6" fill="#e8e8e8"/><path d="M32 13.4 h2.4 q2 0 2 2 v3.6 q0 2 -2 2 h-2.4Z" fill="#2a2a2a"/><path d="M2 13.4 L-5.6 17.2 L2 21Z" fill="#d6d6d6" stroke="#222" stroke-width=".7"/><path d="M-5.6 17.2 L-2.8 15.8 L-2.8 18.6Z" fill="#111"/></g></svg>
<div class="t" style="width:128px">Custom key</div>
</div>
</body></html>
